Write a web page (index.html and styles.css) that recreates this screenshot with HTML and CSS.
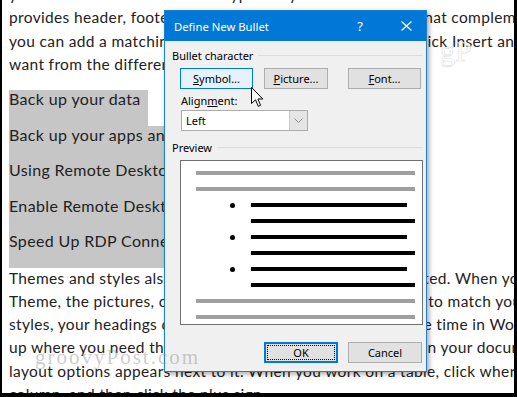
FILE: index.html
```html
<!DOCTYPE html>
<html lang="en">

<head>
    <meta charset="UTF-8">
    <meta name="viewport" content="width=device-width,initial-scale=1">
    <title>Define New Bullet</title>
    <link rel="stylesheet" href="styles.css">
</head>

<body>
    <div class="page">
        <div class="doc">
            <div class="para top">
                <div class="ln">you want to add. You can also type a keyword to search online for the video. To make your document look produced, Word</div>
                <div class="ln">provides header, footer, cover page, and text box designs that complement each other. For example,</div>
                <div class="ln">you can add a matching cover page, header, and sidebar. Click Insert and then choose the elements you</div>
                <div class="ln">want from the different galleries.</div>
            </div>

            <div class="sel">
                <div class="sel-row"><span class="hl">Back up your data</span></div>
                <div class="sel-row"><span class="hl">Back up your apps and files</span></div>
                <div class="sel-row"><span class="hl">Using Remote Desktop on Windows 10</span></div>
                <div class="sel-row"><span class="hl">Enable Remote Desktop in Windows 10</span></div>
                <div class="sel-row"><span class="hl">Speed Up RDP Connections</span></div>
            </div>

            <div class="para">
                <div class="ln">Themes and styles also help keep your document coordinated. When you click Design and choose a new</div>
                <div class="ln">Theme, the pictures, charts, and SmartArt graphics change to match your new theme. When you apply</div>
                <div class="ln">styles, your headings change to match the new theme. Save time in Word with new buttons that show</div>
                <div class="ln">up where you need them. To change the way a picture fits in your document, click it and a button for</div>
                <div class="ln">layout options appears next to it. When you work on a table, click where you want to add a row or a</div>
                <div class="ln">column, and then click the plus sign.</div>
            </div>
        </div>

        <div class="dlg">
            <div class="dlg-title">
                <span class="dlg-name">Define New Bullet</span>
                <span class="dlg-help">?</span>
                <span class="dlg-close">
                    <svg width="11" height="10" viewBox="0 0 11 10">
                        <path d="M0.5 0.5 L10.5 9.5 M10.5 0.5 L0.5 9.5" stroke="#fff" stroke-width="1.2" fill="none"/>
                    </svg>
                </span>
            </div>

            <div class="dlg-body">
                <div class="group-head"><span>Bullet character</span><i class="rule"></i></div>
                <div class="group">
                    <div class="btn-row">
                        <div class="btn btn-hot"><u>S</u>ymbol...</div>
                        <div class="btn btn-pic"><u>P</u>icture...</div>
                        <div class="btn btn-font"><u>F</u>ont...</div>
                    </div>
                    <div class="field-label">Align<u>m</u>ent:</div>
                    <div class="combo">
                        <span class="combo-value">Left</span>
                        <span class="combo-arrow">
                            <svg width="9" height="5" viewBox="0 0 9 5">
                                <path d="M0.5 0.5 L4.5 4.5 L8.5 0.5" stroke="#8a8a8a" fill="none"/>
                            </svg>
                        </span>
                    </div>
                </div>

                <div class="group-head head-preview"><span>Preview</span><i class="rule"></i></div>
                <div class="group">
                    <div class="preview">
                        <div class="pv pv-gray"></div>
                        <div class="pv pv-gray"></div>
                        <div class="pv pv-b"><i class="dot"></i><i class="bar"></i></div>
                        <div class="pv pv-c"><i class="bar"></i></div>
                        <div class="pv pv-b"><i class="dot"></i><i class="bar"></i></div>
                        <div class="pv pv-c"><i class="bar"></i></div>
                        <div class="pv pv-b"><i class="dot"></i><i class="bar"></i></div>
                        <div class="pv pv-c"><i class="bar"></i></div>
                        <div class="pv pv-gray"></div>
                        <div class="pv pv-gray"></div>
                    </div>
                </div>

                <div class="dlg-actions">
                    <div class="btn btn-ok"><span class="focus">OK</span></div>
                    <div class="btn btn-cancel">Cancel</div>
                </div>
            </div>
        </div>

        <svg class="cursor" width="13" height="21" viewBox="0 0 13 21">
            <path d="M0.5 0.5 L0.5 16.5 L4.5 12.8 L7.3 19.3 L9.6 18.3 L6.9 12 L11.8 12 Z" fill="#fff" stroke="#000" stroke-width="1" stroke-linejoin="miter"/>
        </svg>

        <div class="wm wm-main">groovyPost.com</div>
        <div class="wm wm-logo">gP</div>
    </div>
</body>

</html>
```

FILE: styles.css
```css
html,
body {
    margin: 0;
    padding: 0;
}

.page {
    position: relative;
    width: 517px;
    height: 397px;
    box-sizing: border-box;
    border-left: 2px solid #000;
    border-right: 3px solid #000;
    border-bottom: 4px solid #000;
    overflow: hidden;
    background: #fff;
}

/* document behind the dialog */

.doc {
    padding-left: 7px;
    font-family: 'Lato', 'Open Sans', sans-serif;
    font-size: 15.5px;
    letter-spacing: .35px;
    color: #222;
    white-space: nowrap;
}

.ln {
    line-height: 23.3px;
}

.para.top {
    margin-top: -16.95px;
    margin-bottom: 12.75px;
}

.sel {
    font-size: 16px;
}

.sel-row {
    height: 35.5px;
}

.hl {
    display: inline-block;
    box-sizing: border-box;
    height: 35.5px;
    padding: 0 7px 0 0;
    line-height: 18.6px;
    background: #c6c6c6;
}

/* dialog */

.dlg {
    position: absolute;
    left: 162px;
    top: 10px;
    width: 263px;
    box-sizing: border-box;
    border: 1px solid #1c7fd6;
    background: #f0f0f0;
    box-shadow: 2px 2px 5px rgba(0, 0, 0, .35);
    font-family: 'Noto Sans', sans-serif;
    font-size: 11px;
    letter-spacing: 0;
    color: #000;
}

.dlg-title {
    display: flex;
    align-items: center;
    height: 30px;
    padding-left: 9px;
    background: #0078d7;
    color: #fff;
    font-size: 11.3px;
}

.dlg-name {
    flex: 1;
}

.dlg-help {
    width: 30px;
    margin-right: 11px;
    text-align: center;
    font-size: 13px;
}

.dlg-close {
    display: flex;
    justify-content: center;
    width: 40px;
}

.dlg-body {
    padding: 6px 3px 8px 7px;
}

.group-head {
    display: flex;
    align-items: center;
    height: 16px;
}

.rule {
    flex: 1;
    height: 1px;
    margin-left: 5px;
    background: #dcdcdc;
}

.head-preview {
    margin-top: 8px;
}

.group {
    padding-left: 8px;
}

.btn-row {
    display: flex;
    margin-top: 5px;
}

.btn {
    display: flex;
    align-items: center;
    justify-content: center;
    box-sizing: border-box;
    width: 73px;
    height: 21px;
    border: 1px solid #adadad;
    background: #e1e1e1;
}

.btn-hot {
    border-color: #0078d7;
    background: #e5f1fb;
}

.btn-pic {
    width: 64px;
    margin-left: 11px;
}

.btn-font {
    margin-left: 20px;
}

.field-label {
    height: 14px;
    line-height: 14px;
    margin: 5px 0 0 1px;
}

.combo {
    display: flex;
    box-sizing: border-box;
    width: 127px;
    height: 21px;
    margin: 2px 0 0 1px;
    border: 1px solid #acacac;
    background: #fff;
}

.combo-value {
    flex: 1;
    padding-left: 4px;
    line-height: 19px;
}

.combo-arrow {
    display: flex;
    align-items: center;
    justify-content: center;
    width: 17px;
    background: #e5e5e5;
    border-left: 1px solid #c8c8c8;
}

.preview {
    display: flex;
    flex-direction: column;
    gap: 12px;
    box-sizing: border-box;
    width: 243px;
    height: 165px;
    margin-top: 5px;
    padding: 10px 7px 5px 15px;
    border: 1px solid #707070;
    background: #fff;
}

.pv {
    display: flex;
    align-items: center;
    height: 4px;
}

.pv-gray {
    background: #a0a0a0;
}

.pv-b {
    padding-left: 34px;
    margin-right: 8px;
}

.pv-c {
    padding-left: 55px;
}

.dot {
    width: 5px;
    height: 5px;
    margin-right: 16px;
    border-radius: 50%;
    background: #000;
}

.bar {
    flex: 1;
    height: 4px;
    background: #000;
}

.dlg-actions {
    display: flex;
    justify-content: flex-end;
    gap: 10px;
    margin-top: 17px;
    padding-right: 1px;
}

.btn-ok,
.btn-cancel {
    width: 74px;
}

.btn-ok {
    border: 2px solid #0078d7;
}

.focus {
    display: flex;
    align-items: center;
    justify-content: center;
    box-sizing: border-box;
    width: 66px;
    height: 13px;
    outline: 1px dotted #000;
}

/* pointer and watermark on top */

.cursor {
    position: absolute;
    left: 249px;
    top: 87px;
}

.wm {
    position: absolute;
    font-family: 'Liberation Serif', serif;
    line-height: 1;
    white-space: nowrap;
}

.wm-main {
    left: 33px;
    top: 347px;
    font-size: 21px;
    letter-spacing: 2px;
    color: rgba(140, 140, 140, .45);
}

.wm-logo {
    left: 438px;
    top: 36px;
    font-size: 30px;
    color: rgba(255, 255, 255, .75);
    -webkit-text-stroke: .6px rgba(150, 150, 150, .35);
}
```
